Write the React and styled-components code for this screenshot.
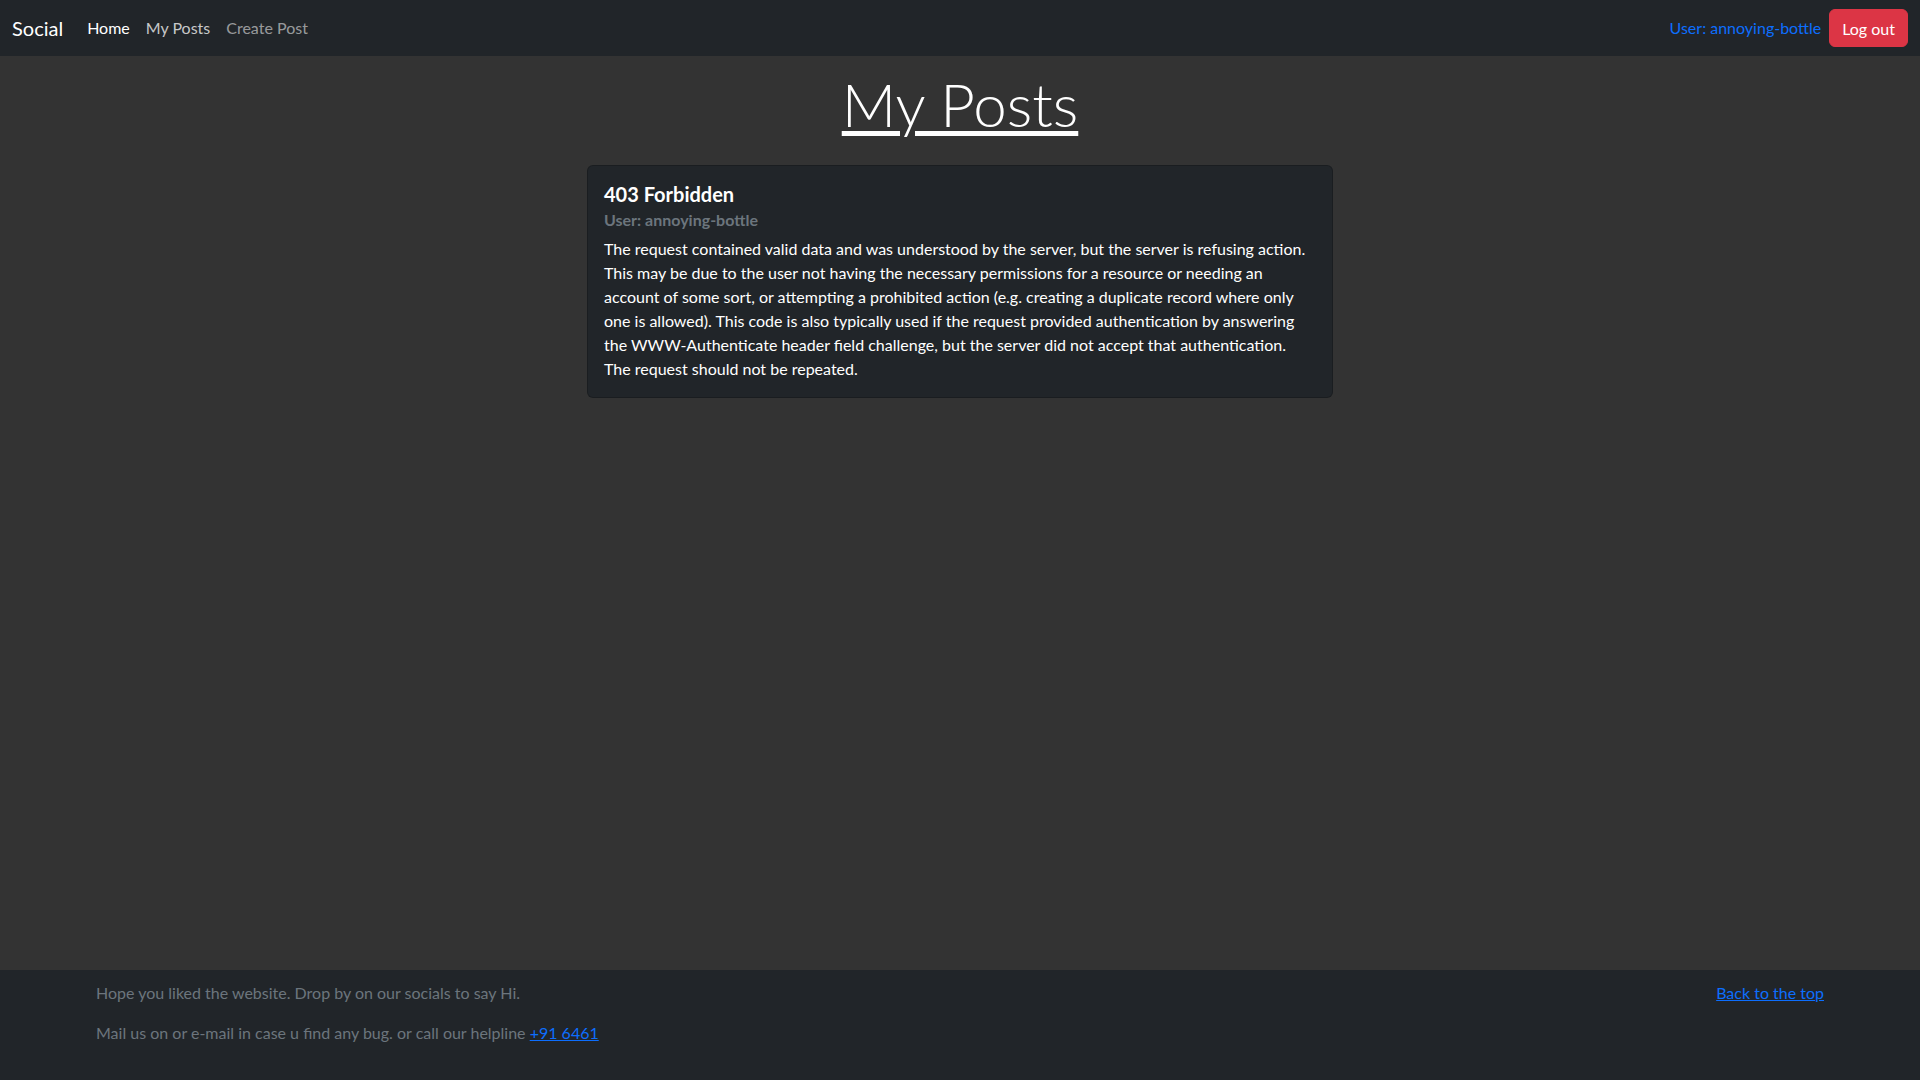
import styled, { createGlobalStyle } from "styled-components";

const GlobalStyle = createGlobalStyle`
  *, *::before, *::after {
    box-sizing: border-box;
  }

  body {
    margin: 0;
    font-family: Lato, "Open Sans", sans-serif;
    font-size: 16px;
    line-height: 1.5;
    color: #dee2e6;
    background-color: #333333;
  }
`;

const Page = styled.div`
  min-height: 100vh;
  display: flex;
  flex-direction: column;
`;

const Navbar = styled.nav`
  display: flex;
  align-items: center;
  justify-content: space-between;
  height: 56px;
  padding: 0 12px;
  background-color: #212529;
`;

const NavLeft = styled.div`
  display: flex;
  align-items: center;
`;

const Brand = styled.a`
  margin-right: 16px;
  font-size: 20px;
  color: #fff;
  text-decoration: none;
`;

const NavLink = styled.a`
  padding: 8px;
  color: ${(props) => props.$color};
  text-decoration: none;
`;

const NavRight = styled.div`
  display: flex;
  align-items: center;
  gap: 8px;
`;

const UserName = styled.span`
  color: #0d6efd;
`;

const LogoutButton = styled.button`
  height: 38px;
  padding: 0 12px;
  border: 1px solid #dc3545;
  border-radius: 6px;
  background-color: #dc3545;
  color: #fff;
  font-family: inherit;
  font-size: 16px;
`;

const Main = styled.main`
  flex: 1;
  display: flex;
  flex-direction: column;
  align-items: center;
`;

const Title = styled.h1`
  margin: 12px 0 25px;
  font-size: 60px;
  font-weight: 300;
  line-height: 1.2;
  color: #fff;
  text-decoration: underline;
  text-decoration-thickness: 5px;
  text-underline-offset: 4px;
`;

const Card = styled.div`
  width: 746px;
  padding: 16px;
  background-color: #212529;
  border: 1px solid rgba(0, 0, 0, 0.2);
  border-radius: 6px;
`;

const CardTitle = styled.h5`
  margin: 0 0 8px;
  font-size: 20px;
  font-weight: 700;
  line-height: 1.2;
  color: #fff;
`;

const CardSubtitle = styled.h6`
  margin: -4px 0 8px;
  font-size: 16px;
  font-weight: 700;
  line-height: 1.2;
  color: #6c757d;
`;

const CardText = styled.p`
  margin: 0;
  color: #fff;
`;

const Footer = styled.footer`
  display: flex;
  justify-content: space-between;
  align-items: flex-start;
  padding: 11px 96px 19px;
  background-color: #212529;
  color: #6c757d;
`;

const FooterText = styled.p`
  margin: 0 0 16px;
`;

const Link = styled.a`
  color: #0d6efd;
  text-decoration: underline;
`;

export default function App() {
  return (
    <Page>
      <GlobalStyle />
      <Navbar>
        <NavLeft>
          <Brand href="#">Social</Brand>
          <NavLink href="#" $color="#ffffff">
            Home
          </NavLink>
          <NavLink href="#" $color="rgba(255, 255, 255, 0.75)">
            My Posts
          </NavLink>
          <NavLink href="#" $color="rgba(255, 255, 255, 0.55)">
            Create Post
          </NavLink>
        </NavLeft>
        <NavRight>
          <UserName>User: annoying-bottle</UserName>
          <LogoutButton>Log out</LogoutButton>
        </NavRight>
      </Navbar>

      <Main>
        <Title>My Posts</Title>
        <Card>
          <CardTitle>403 Forbidden</CardTitle>
          <CardSubtitle>User: annoying-bottle</CardSubtitle>
          <CardText>
            The request contained valid data and was understood by the server,
            but the server is refusing action. This may be due to the user not
            having the necessary permissions for a resource or needing an
            account of some sort, or attempting a prohibited action (e.g.
            creating a duplicate record where only one is allowed). This code is
            also typically used if the request provided authentication by
            answering the WWW-Authenticate header field challenge, but the
            server did not accept that authentication. The request should not be
            repeated.
          </CardText>
        </Card>
      </Main>

      <Footer>
        <div>
          <FooterText>
            Hope you liked the website. Drop by on our socials to say Hi.
          </FooterText>
          <FooterText>
            Mail us on or e-mail in case u find any bug. or call our helpline{" "}
            <Link href="#">+91 6461</Link>
          </FooterText>
        </div>
        <FooterText>
          <Link href="#">Back to the top</Link>
        </FooterText>
      </Footer>
    </Page>
  );
}
